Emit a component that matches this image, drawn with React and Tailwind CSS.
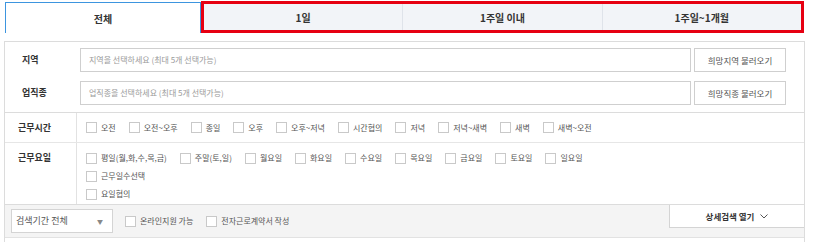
const timeOptions = ["오전", "오전~오후", "종일", "오후", "오후~저녁", "시간협의", "저녁", "저녁~새벽", "새벽", "새벽~오전"];
const dayOptions = ["평일(월,화,수,목,금)", "주말(토,일)", "월요일", "화요일", "수요일", "목요일", "금요일", "토요일", "일요일"];

const Check = ({ label, className = "" }) => (
  <label className={`flex items-center gap-[4px] text-[8px] text-[#555] leading-[18px] ${className}`}>
    <span className="w-[11px] h-[11px] border border-[#c9c9c9] bg-white shrink-0" />
    <span className="whitespace-nowrap">{label}</span>
  </label>
);

const App = () => {
  return (
    <div
      className="w-[813px] h-[242px] bg-white overflow-hidden"
      style={{ fontFamily: '"Noto Sans CJK KR", "Noto Sans", sans-serif' }}
    >
      {/* Tabs */}
      <div className="flex h-[33px]">
        <div className="ml-[5px] mt-[2px] w-[196px] h-[31px] border-t border-l border-r border-[#3d95df] bg-white flex items-center justify-center text-[10px] font-semibold text-[#333]">
          전체
        </div>
        <div className="mt-[1px] w-[603px] h-[32px] border-[3px] border-[#e60012] flex">
          {["1일", "1주일 이내", "1주일~1개월"].map((t, i) => (
            <div
              key={t}
              className={`flex-1 flex items-center justify-center bg-[#f2f4f8] text-[10px] font-semibold text-[#333] ${i > 0 ? "border-l border-[#dfe3ea]" : ""}`}
            >
              {t}
            </div>
          ))}
        </div>
      </div>

      {/* Search panel */}
      <div className="mt-[8px] ml-[4px] w-[801px] h-[220px] border border-[#dcdcdc]">
        {/* Region / job */}
        <div className="flex flex-col gap-[9px] pt-[6px] pb-[7px] border-b border-[#dcdcdc]">
          {[
            ["지역", "지역을 선택하세요 (최대 5개 선택가능)", "희망지역 불러오기"],
            ["업직종", "업직종을 선택하세요 (최대 5개 선택가능)", "희망직종 불러오기"],
          ].map(([label, ph, btn]) => (
            <div key={label} className="flex items-center h-[24px] pl-[17px] pr-[18px]">
              <div className="w-[58px] text-[9px] font-semibold text-[#333]">{label}</div>
              <div className="flex-1 h-full border border-[#cfcfcf] flex items-center pl-[8px] text-[8px] text-[#9a9a9a]">
                {ph}
              </div>
              <button className="ml-[3px] w-[92px] h-full border border-[#cfcfcf] bg-white text-[8.5px] text-[#555]">
                {btn}
              </button>
            </div>
          ))}
        </div>

        {/* Work time */}
        <div className="flex h-[30px] border-b border-[#e6e6e6]">
          <div className="w-[72px] border-r border-[#e2e2e2] flex items-center pl-[13px] text-[9px] font-semibold text-[#333]">
            근무시간
          </div>
          <div className="flex items-center gap-x-[13px] pl-[9px]">
            {timeOptions.map((o) => (
              <Check key={o} label={o} />
            ))}
          </div>
        </div>

        {/* Work days */}
        <div className="flex h-[62px] border-b border-[#dcdcdc]">
          <div className="w-[72px] border-r border-[#e2e2e2] pt-[6px] pl-[13px] text-[9px] font-semibold text-[#333] leading-[18px]">
            근무요일
          </div>
          <div className="pt-[6px] pl-[9px] flex flex-col">
            <div className="flex gap-x-[13px]">
              {dayOptions.map((o) => (
                <Check key={o} label={o} />
              ))}
            </div>
            <Check label="근무일수선택" />
            <Check label="요일협의" />
          </div>
        </div>

        {/* Bottom bar */}
        <div className="flex items-start h-[33px] bg-[#f4f4f4] border-b border-[#e2e2e2]">
          <div className="mt-[4px] ml-[6px] w-[102px] h-[24px] bg-white border border-[#d4d4d4] flex items-center justify-between pl-[4px] pr-[9px] text-[9px] text-[#555]">
            <span>검색기간 전체</span>
            <span className="text-[6px] text-[#888]">▼</span>
          </div>
          <div className="mt-[4px] h-[24px] flex items-center gap-x-[13px] ml-[12px]">
            <Check label="온라인지원 가능" />
            <Check label="전자근로계약서 작성" />
          </div>
          <button className="ml-auto w-[135px] h-[23px] bg-white border-l border-b border-[#d4d4d4] flex items-center justify-center gap-[6px] text-[8.5px] font-semibold text-[#333]">
            상세검색 열기
            <svg width="8" height="5" viewBox="0 0 8 5" fill="none">
              <path d="M0.5 0.5L4 4L7.5 0.5" stroke="#555" strokeWidth="1" />
            </svg>
          </button>
        </div>
      </div>
    </div>
  );
};

export default App;
